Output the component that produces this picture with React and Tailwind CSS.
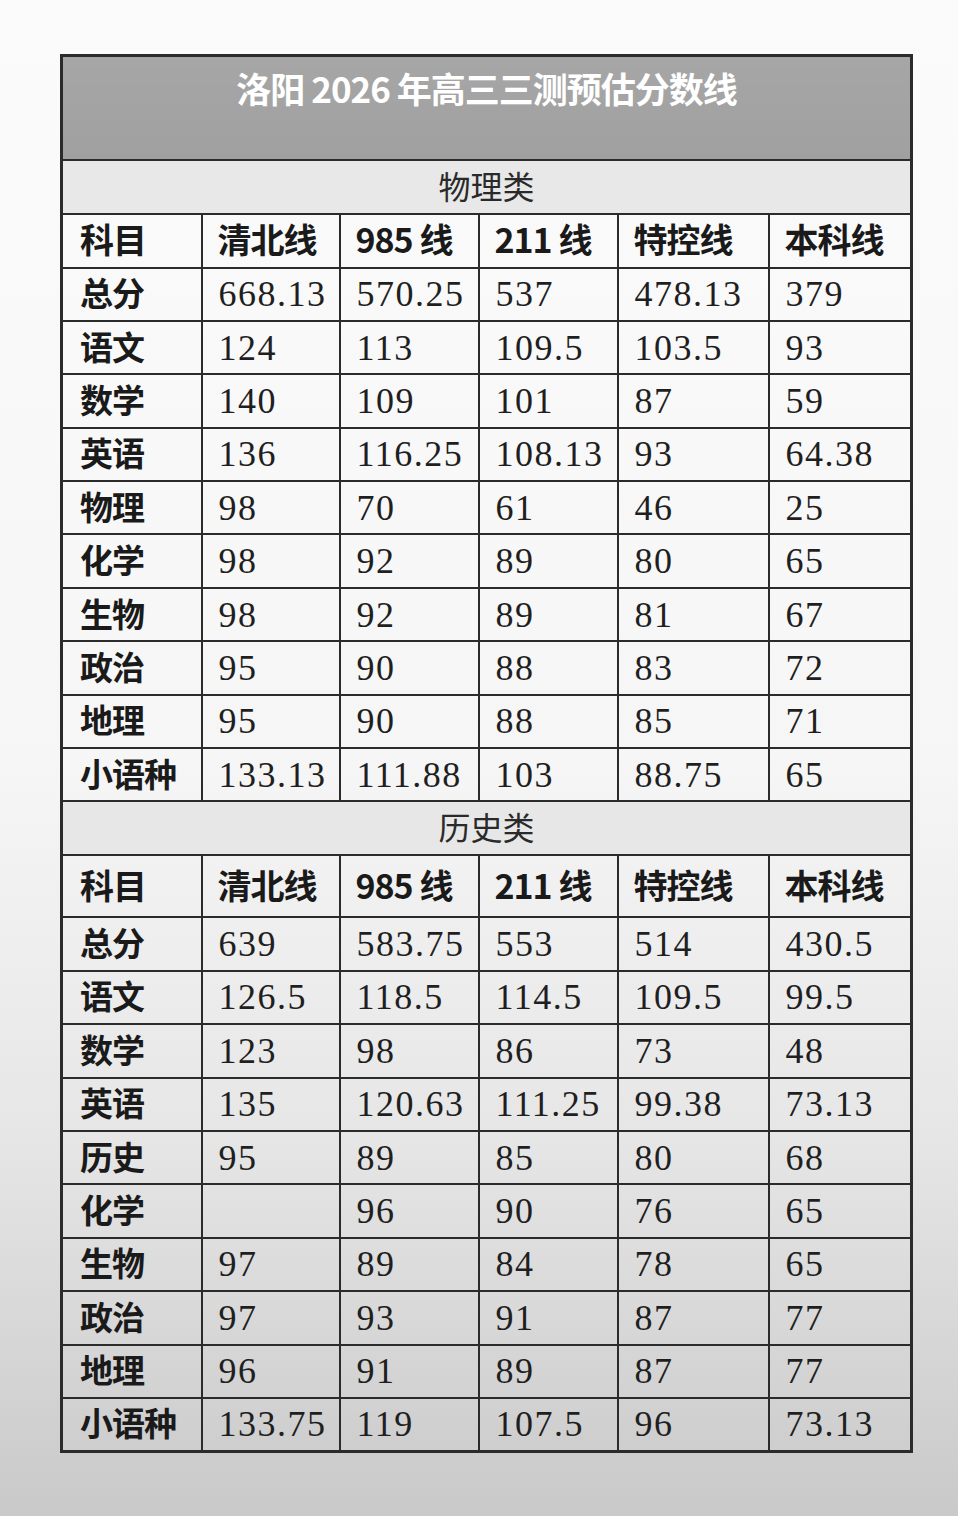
import React from "react";

const cols = ["科目", "清北线", "985 线", "211 线", "特控线", "本科线"];

const physics = [
  ["总分", "668.13", "570.25", "537", "478.13", "379"],
  ["语文", "124", "113", "109.5", "103.5", "93"],
  ["数学", "140", "109", "101", "87", "59"],
  ["英语", "136", "116.25", "108.13", "93", "64.38"],
  ["物理", "98", "70", "61", "46", "25"],
  ["化学", "98", "92", "89", "80", "65"],
  ["生物", "98", "92", "89", "81", "67"],
  ["政治", "95", "90", "88", "83", "72"],
  ["地理", "95", "90", "88", "85", "71"],
  ["小语种", "133.13", "111.88", "103", "88.75", "65"],
];

const history = [
  ["总分", "639", "583.75", "553", "514", "430.5"],
  ["语文", "126.5", "118.5", "114.5", "109.5", "99.5"],
  ["数学", "123", "98", "86", "73", "48"],
  ["英语", "135", "120.63", "111.25", "99.38", "73.13"],
  ["历史", "95", "89", "85", "80", "68"],
  ["化学", "", "96", "90", "76", "65"],
  ["生物", "97", "89", "84", "78", "65"],
  ["政治", "97", "93", "91", "87", "77"],
  ["地理", "96", "91", "89", "87", "77"],
  ["小语种", "133.75", "119", "107.5", "96", "73.13"],
];

const sans = "font-['Noto_Sans_CJK_SC',sans-serif]";
const cell = "border-2 border-[#2b2b2b] p-0 align-middle";

const Num = ({ v }) => (
  <span className="[font-family:Liberation_Serif,Tinos,Times_New_Roman,DejaVu_Serif,serif] text-[36px] text-[#1f1f1f] leading-none tracking-[1.5px]">{v}</span>
);

const Section = ({ name, rows, headH }) => (
  <>
    <tr className="h-[54px]">
      <td colSpan={6} className={`${cell} bg-[#e4e4e4]/80 text-center`}>
        <span className={`${sans} text-[32px] font-normal text-[#2a2a2a] leading-none`}>{name}</span>
      </td>
    </tr>
    <tr className={headH}>
      {cols.map((c, i) => (
        <td key={c} className={`${cell} text-left ${i === 0 ? "pl-[17px]" : "pl-[15px]"}`}>
          <span className={`${sans} text-[34px] font-semibold text-[#1a1a1a] leading-none tracking-[-1px]`}>{c}</span>
        </td>
      ))}
    </tr>
    {rows.map((r) => (
      <tr key={r[0]} className="h-[53.4px]">
        {r.map((v, i) =>
          i === 0 ? (
            <td key={i} className={`${cell} text-left pl-[17px]`}>
              <span className={`${sans} text-[33px] font-semibold text-[#1a1a1a] leading-none tracking-[-1px]`}>{v}</span>
            </td>
          ) : (
            <td key={i} className={`${cell} text-left pl-[16px]`}>
              <Num v={v} />
            </td>
          )
        )}
      </tr>
    ))}
  </>
);

export default function App() {
  return (
    <div className="w-[958px] h-[1516px] bg-[linear-gradient(180deg,#fbfbfb_0%,#f6f6f6_50%,#e6e6e6_75%,#c9c9c9_100%)] pt-[54px] pl-[60px]">
      <table className="table-fixed border-collapse w-[850px] border-[3px] border-[#2b2b2b]">
        <colgroup>
          <col className="w-[140px]" />
          <col className="w-[138px]" />
          <col className="w-[139px]" />
          <col className="w-[139px]" />
          <col className="w-[151px]" />
          <col className="w-[143px]" />
        </colgroup>
        <tbody>
          <tr className="h-[104px]">
            <td colSpan={6} className={`${cell} bg-[linear-gradient(180deg,#a6a6a6,#a0a0a0)] text-center align-top pt-[5px]`}>
              <span className={`${sans} text-[35px] font-semibold text-white tracking-[-1px]`}>洛阳 2026 年高三三测预估分数线</span>
            </td>
          </tr>
          <Section name="物理类" rows={physics} headH="h-[54px]" />
          <Section name="历史类" rows={history} headH="h-[62px]" />
        </tbody>
      </table>
    </div>
  );
}
